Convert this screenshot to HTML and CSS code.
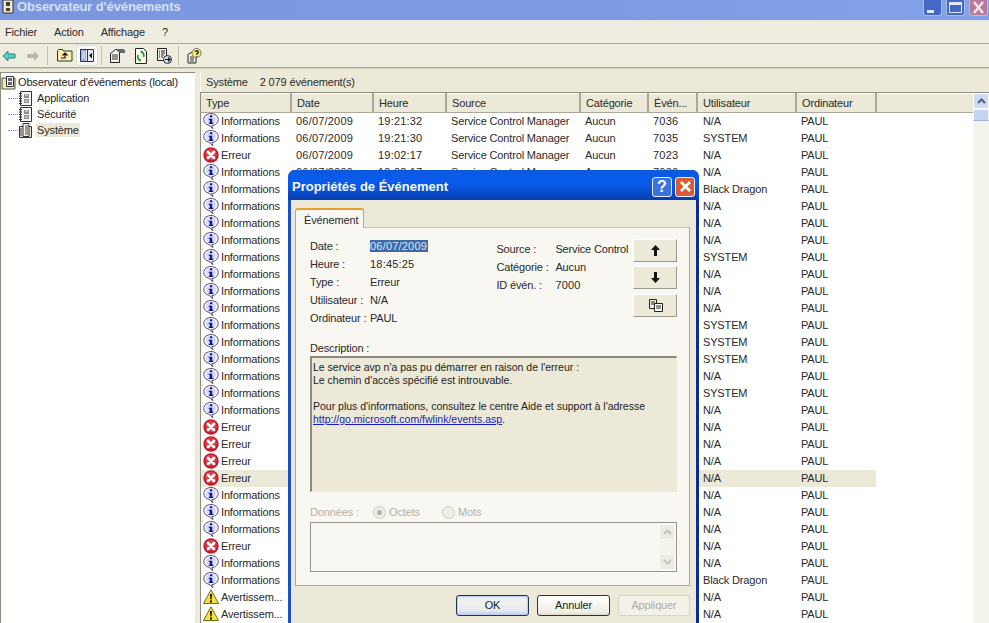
FILE: index.html
```
<!DOCTYPE html>
<html lang="fr">
<head>
<meta charset="utf-8">
<title>Observateur d'événements</title>
<link rel="stylesheet" href="styles.css">
</head>
<body>
<svg class="defs" width="0" height="0">
<symbol id="info" viewBox="0 0 16 16"><path d="M8 .5c4 0 7.200 2.600 7.200 6s-3 6-6.400 6L10 15.700 6 12.300C3 11.800.8 9.500.8 6.500c0-3.400 3.200-6 7.200-6z" fill="#f4f4fa" stroke="#50506e"/><circle cx="8" cy="6.500" r="4.800" fill="#d4d8f2"/><path d="M7 2.300h2.200v2H7zM5.800 5.800h3.400v3.900h1.100v1.300H5.800V9.700h1V7.100h-1z" fill="#14149a"/></symbol>
<symbol id="err" viewBox="0 0 16 16"><circle cx="8" cy="8" r="7.700" fill="#c01c2c"/><circle cx="8" cy="7.300" r="5.800" fill="#d84048"/><path d="M5 5l6 6M11 5l-6 6" stroke="#fff" stroke-width="2.800" stroke-linecap="round"/></symbol>
<symbol id="warn" viewBox="0 0 16 16"><path d="M8 .8L15.500 14.500H.5z" fill="#f6e23c" stroke="#7a6a18" stroke-linejoin="round"/><path d="M7 5h2l-.4 5.500H7.400zM7 11.500h2v2H7z" fill="#111"/></symbol>
<symbol id="log" viewBox="0 0 15 15"><path d="M2.500.5h11v14h-11z" fill="#f6f4ea" stroke="#333"/><path d="M1 2.500h3M1 5h3M1 7.500h3M1 10h3M1 12.500h3" stroke="#333"/><path d="M6 3h5v4H6zM6 8h5v4H6z" fill="#8c8c98"/><path d="M7 4h3M7 10h3" stroke="#eee"/></symbol>
<symbol id="log-open" viewBox="0 0 15 15"><path d="M1.500 3.500h12v11h-12z" fill="#e8e4d2" stroke="#333"/><path d="M5 .5h6v13H5z" fill="#f8f6ec" stroke="#333"/><path d="M3 5v8M7 3h3M7 5h3M7 7h3M7 9h3M7 11h3" stroke="#444"/></symbol>
</svg>

<div class="window">
  <header class="titlebar">
    <svg class="app-icon" width="14" height="14" viewBox="0 0 14 14"><path d="M2 0h10v13H2z" fill="#efe9cc" stroke="#333"/><path d="M5 2h4v4H5zM5 8h4v3H5z" fill="#443"/></svg>
    <span class="title">Observateur d'événements</span>
    <div class="win-buttons">
      <span class="win-btn"><i class="glyph-min"></i></span>
      <span class="win-btn"><i class="glyph-max"></i></span>
      <span class="win-btn win-close">
        <svg width="13" height="13" viewBox="0 0 13 13"><path d="M2 1l9 11M11 1L2 12" stroke="#f4e8ee" stroke-width="2.400"/></svg>
      </span>
    </div>
  </header>

  <nav class="menubar">
    <span>Fichier</span><span>Action</span><span>Affichage</span><span>?</span>
  </nav>

  <div class="toolbar">
    <svg class="t-back" width="14" height="12" viewBox="0 0 14 12"><path d="M1 6l5-5v3h7v4H6v3z" fill="#52d0c0" stroke="#2f8478"/></svg>
    <svg class="t-fwd" width="14" height="12" viewBox="0 0 14 12"><path d="M13 6L8 1v3H1v4h7v3z" fill="#bab8aa"/></svg>
    <i class="t-sep t-sep-a"></i>
    <svg class="t-up" width="17" height="15" viewBox="0 0 17 15"><path d="M1.500 2.500l1-1h4l1 1.500h8.500v10H1.500z" fill="#f8eeb0" stroke="#333"/><path d="M6.500 7.500L9 5l2.500 2.500M9 5.500V10H5" fill="none" stroke="#111" stroke-width="1.200"/></svg>
    <span class="t-active"><svg width="14" height="13" viewBox="0 0 14 13"><path d="M.5.500h13v12H.5z" fill="#e8ecf6" stroke="#2a3050"/><path d="M1 1h5v11H1z" fill="#9cb0d8"/><path d="M2 3h3M2 5h3M2 7h3M2 9h3" stroke="#eef" /><path d="M7 1h1v11H7z" fill="#2a3050"/><path d="M12 3.500v6L9 6.500z" fill="#111"/></svg></span>
    <i class="t-sep t-sep-b"></i>
    <svg class="t-prop" width="17" height="16" viewBox="0 0 17 16"><path d="M1.500 5.500l5-4h4v13h-9z" fill="#f4f2e6" stroke="#222"/><path d="M3 7h6M3 9h6M3 11h6" stroke="#333"/><path d="M8 1h6l2 1v3h-5L8 3z" fill="#606870"/></svg>
    <svg class="t-ref" width="14" height="16" viewBox="0 0 14 16"><path d="M1.500.5h8l3 3v12h-11z" fill="#fbfbf0" stroke="#222"/><path d="M6.500 3.500a4 4 0 0 1 3 5.500M7 12.500a4 4 0 0 1-3-5.500" fill="none" stroke="#1c9a3c" stroke-width="1.800"/></svg>
    <svg class="t-exp" width="16" height="16" viewBox="0 0 16 16"><path d="M1.500.5h9v12h-9z" fill="#f4f2e6" stroke="#222"/><path d="M3 3h1M5 3h4M3 5h1M5 5h4M3 7h1M5 7h3M3 9h1M5 9h2" stroke="#223"/><circle cx="11.500" cy="11.500" r="4" fill="#dfe4ee" stroke="#223"/><path d="M9 11.500h5M12 9.500l2 2-2 2" fill="none" stroke="#111" stroke-width="1.200"/></svg>
    <i class="t-sep t-sep-c"></i>
    <svg class="t-help" width="15" height="16" viewBox="0 0 15 16"><path d="M1 6.500l3-2h5v10.500H1z" fill="#f4f2e6" stroke="#222"/><path d="M3 9h4M3 11h4M3 13h4" stroke="#333"/><circle cx="9.500" cy="5" r="4.500" fill="#f8ee70" stroke="#776"/><path d="M7.800 3.800a1.800 1.500 0 1 1 2 2v1M9.800 8v.800" fill="none" stroke="#222" stroke-width="1.400"/></svg>
  </div>

  <main class="panes">
    <aside class="tree">
      <div class="tree-root"><svg class="ti" width="15" height="15" viewBox="0 0 15 15"><path d="M1 3h13v11H1z" fill="#f2e9b4" stroke="#554"/><path d="M5.500 1.500h7v10h-7z" fill="#fff" stroke="#333"/><path d="M7 3h4v3H7zM7 7h4v3H7z" fill="#667"/></svg>Observateur d'événements (local)</div>
      <div class="tree-item"><i class="dots"></i><svg class="ti"><use href="#log"/></svg><span>Application</span></div>
      <div class="tree-item"><i class="dots"></i><svg class="ti"><use href="#log"/></svg><span>Sécurité</span></div>
      <div class="tree-item"><i class="dots"></i><svg class="ti"><use href="#log-open"/></svg><span class="selected">Système</span></div>
    </aside>

    <section class="content">
      <div class="status"><span>Système</span><span>2 079 événement(s)</span></div>
      <div class="list">
        <div class="table-wrap">
          <table class="events">
            <colgroup><col class="c1"><col class="c2"><col class="c3"><col class="c4"><col class="c5"><col class="c6"><col class="c7"><col class="c8"><col></colgroup>
            <thead><tr><th>Type</th><th>Date</th><th>Heure</th><th>Source</th><th>Catégorie</th><th>Évén...</th><th>Utilisateur</th><th>Ordinateur</th><th></th></tr></thead>
            <tbody>
              <tr><td><svg class="ic"><use href="#info"/></svg>Informations</td><td>06/07/2009</td><td>19:21:32</td><td>Service Control Manager</td><td>Aucun</td><td>7036</td><td>N/A</td><td>PAUL</td></tr>
              <tr><td><svg class="ic"><use href="#info"/></svg>Informations</td><td>06/07/2009</td><td>19:21:30</td><td>Service Control Manager</td><td>Aucun</td><td>7035</td><td>SYSTEM</td><td>PAUL</td></tr>
              <tr><td><svg class="ic"><use href="#err"/></svg>Erreur</td><td>06/07/2009</td><td>19:02:17</td><td>Service Control Manager</td><td>Aucun</td><td>7023</td><td>N/A</td><td>PAUL</td></tr>
              <tr><td><svg class="ic"><use href="#info"/></svg>Informations</td><td>06/07/2009</td><td>19:02:17</td><td>Service Control Manager</td><td>Aucun</td><td>7036</td><td>N/A</td><td>PAUL</td></tr>
              <tr><td><svg class="ic"><use href="#info"/></svg>Informations</td><td></td><td></td><td></td><td></td><td></td><td>Black Dragon</td><td>PAUL</td></tr>
              <tr><td><svg class="ic"><use href="#info"/></svg>Informations</td><td></td><td></td><td></td><td></td><td></td><td>N/A</td><td>PAUL</td></tr>
              <tr><td><svg class="ic"><use href="#info"/></svg>Informations</td><td></td><td></td><td></td><td></td><td></td><td>N/A</td><td>PAUL</td></tr>
              <tr><td><svg class="ic"><use href="#info"/></svg>Informations</td><td></td><td></td><td></td><td></td><td></td><td>N/A</td><td>PAUL</td></tr>
              <tr><td><svg class="ic"><use href="#info"/></svg>Informations</td><td></td><td></td><td></td><td></td><td></td><td>SYSTEM</td><td>PAUL</td></tr>
              <tr><td><svg class="ic"><use href="#info"/></svg>Informations</td><td></td><td></td><td></td><td></td><td></td><td>N/A</td><td>PAUL</td></tr>
              <tr><td><svg class="ic"><use href="#info"/></svg>Informations</td><td></td><td></td><td></td><td></td><td></td><td>N/A</td><td>PAUL</td></tr>
              <tr><td><svg class="ic"><use href="#info"/></svg>Informations</td><td></td><td></td><td></td><td></td><td></td><td>N/A</td><td>PAUL</td></tr>
              <tr><td><svg class="ic"><use href="#info"/></svg>Informations</td><td></td><td></td><td></td><td></td><td></td><td>SYSTEM</td><td>PAUL</td></tr>
              <tr><td><svg class="ic"><use href="#info"/></svg>Informations</td><td></td><td></td><td></td><td></td><td></td><td>SYSTEM</td><td>PAUL</td></tr>
              <tr><td><svg class="ic"><use href="#info"/></svg>Informations</td><td></td><td></td><td></td><td></td><td></td><td>SYSTEM</td><td>PAUL</td></tr>
              <tr><td><svg class="ic"><use href="#info"/></svg>Informations</td><td></td><td></td><td></td><td></td><td></td><td>N/A</td><td>PAUL</td></tr>
              <tr><td><svg class="ic"><use href="#info"/></svg>Informations</td><td></td><td></td><td></td><td></td><td></td><td>SYSTEM</td><td>PAUL</td></tr>
              <tr><td><svg class="ic"><use href="#info"/></svg>Informations</td><td></td><td></td><td></td><td></td><td></td><td>N/A</td><td>PAUL</td></tr>
              <tr><td><svg class="ic"><use href="#err"/></svg>Erreur</td><td></td><td></td><td></td><td></td><td></td><td>N/A</td><td>PAUL</td></tr>
              <tr><td><svg class="ic"><use href="#err"/></svg>Erreur</td><td></td><td></td><td></td><td></td><td></td><td>N/A</td><td>PAUL</td></tr>
              <tr><td><svg class="ic"><use href="#err"/></svg>Erreur</td><td></td><td></td><td></td><td></td><td></td><td>N/A</td><td>PAUL</td></tr>
              <tr class="current"><td><svg class="ic"><use href="#err"/></svg>Erreur</td><td></td><td></td><td></td><td></td><td></td><td>N/A</td><td>PAUL</td></tr>
              <tr><td><svg class="ic"><use href="#info"/></svg>Informations</td><td></td><td></td><td></td><td></td><td></td><td>N/A</td><td>PAUL</td></tr>
              <tr><td><svg class="ic"><use href="#info"/></svg>Informations</td><td></td><td></td><td></td><td></td><td></td><td>N/A</td><td>PAUL</td></tr>
              <tr><td><svg class="ic"><use href="#info"/></svg>Informations</td><td></td><td></td><td></td><td></td><td></td><td>N/A</td><td>PAUL</td></tr>
              <tr><td><svg class="ic"><use href="#err"/></svg>Erreur</td><td></td><td></td><td></td><td></td><td></td><td>N/A</td><td>PAUL</td></tr>
              <tr><td><svg class="ic"><use href="#info"/></svg>Informations</td><td></td><td></td><td></td><td></td><td></td><td>N/A</td><td>PAUL</td></tr>
              <tr><td><svg class="ic"><use href="#info"/></svg>Informations</td><td></td><td></td><td></td><td></td><td></td><td>Black Dragon</td><td>PAUL</td></tr>
              <tr><td><svg class="ic"><use href="#warn"/></svg>Avertissem...</td><td></td><td></td><td></td><td></td><td></td><td>N/A</td><td>PAUL</td></tr>
              <tr><td><svg class="ic"><use href="#warn"/></svg>Avertissem...</td><td></td><td></td><td></td><td></td><td></td><td>N/A</td><td>PAUL</td></tr>
            </tbody>
          </table>
        </div>
        <div class="vscroll">
          <span class="sb-btn"><svg width="9" height="6" viewBox="0 0 9 6"><path d="M1 5l3.500-3.500L8 5" fill="none" stroke="#4d6185" stroke-width="2"/></svg></span>
          <span class="sb-thumb"></span>
        </div>
      </div>
    </section>
  </main>
</div>

<div class="dialog">
  <header class="dlg-title">
    <span>Propriétés de Événement</span>
    <div class="dlg-buttons">
      <span class="dlg-btn dlg-help">?</span>
      <span class="dlg-btn dlg-close"><svg width="15" height="15" viewBox="0 0 15 15"><path d="M3 3l9 9M12 3l-9 9" stroke="#fff" stroke-width="2.600"/></svg></span>
    </div>
  </header>
  <div class="dlg-client">
    <div class="tab">Événement</div>
    <div class="tab-panel">
      <div class="summary">
        <dl class="fields fields-a">
          <dt>Date :</dt><dd><mark>06/07/2009</mark></dd>
          <dt>Heure :</dt><dd class="num">18:45:25</dd>
          <dt>Type :</dt><dd>Erreur</dd>
          <dt>Utilisateur :</dt><dd>N/A</dd>
          <dt>Ordinateur :</dt><dd>PAUL</dd>
        </dl>
        <dl class="fields fields-b">
          <dt>Source :</dt><dd>Service Control</dd>
          <dt>Catégorie :</dt><dd>Aucun</dd>
          <dt>ID évén. :</dt><dd class="num">7000</dd>
        </dl>
        <div class="nav-buttons">
          <button class="nav-btn"><svg width="9" height="11" viewBox="0 0 9 11"><path d="M4.500 0L9 5H6v6H3V5H0z" fill="#111"/></svg></button>
          <button class="nav-btn"><svg width="9" height="11" viewBox="0 0 9 11"><path d="M4.500 11L9 6H6V0H3v6H0z" fill="#111"/></svg></button>
          <button class="nav-btn nav-copy"><svg width="15" height="13" viewBox="0 0 15 13"><path d="M1.500.5h7v9h-7z" fill="#f0eee0" stroke="#222"/><path d="M3 3h4M3 5h3" stroke="#222"/><path d="M6.500 4.500h8v8h-8z" fill="#fff" stroke="#222"/><path d="M8 7h5M8 9h5" stroke="#222"/></svg></button>
        </div>
      </div>
      <div class="desc-label">Description :</div>
      <div class="desc">
        <p>Le service avp n'a pas pu démarrer en raison de l'erreur :<br>Le chemin d'accès spécifié est introuvable.</p>
        <p class="desc-more">Pour plus d'informations, consultez le centre Aide et support à l'adresse<br><a href="#">http://go.microsoft.com/fwlink/events.asp</a>.</p>
      </div>
      <div class="data-row">
        <span class="data-label">Données :</span>
        <span class="radio"><i class="dot on"></i>Octets</span>
        <span class="radio"><i class="dot"></i>Mots</span>
      </div>
      <div class="data-box">
        <div class="data-scroll">
          <span class="ds-btn"><svg width="9" height="6" viewBox="0 0 9 6"><path d="M1 5l3.500-3.500L8 5" fill="none" stroke="#c4c4b8" stroke-width="2"/></svg></span>
          <span class="ds-btn"><svg width="9" height="6" viewBox="0 0 9 6"><path d="M1 1l3.500 3.500L8 1" fill="none" stroke="#c4c4b8" stroke-width="2"/></svg></span>
        </div>
      </div>
    </div>
    <div class="actions">
      <button class="btn btn-default">OK</button>
      <button class="btn">Annuler</button>
      <button class="btn btn-disabled">Appliquer</button>
    </div>
  </div>
</div>
</body>
</html>
```

FILE: styles.css
```
* { box-sizing: border-box; }
html, body { margin: 0; height: 100%; overflow: hidden; }
body {
  position: relative;
  width: 989px;
  height: 623px;
  background: #ece9d8;
  font: 11px/13px "Liberation Sans", Arial, sans-serif;
  letter-spacing: -.15px;
  color: #2a2a2a;
}
.defs { position: absolute; }
.window { display: flex; flex-direction: column; height: 623px; }

.titlebar {
  flex: none;
  height: 22px;
  display: flex;
  align-items: flex-start;
  background: linear-gradient(90deg, #7a96df, #7d9be2 60%, #84a2e6);
  border-bottom: 2px solid #e8e8e4;
}
.app-icon { margin: 0 0 0 1px; }
.title {
  margin: 0 0 0 2px;
  font: bold 13px/14px "Liberation Sans", Arial, sans-serif;
  letter-spacing: -.12px;
  color: #d4e0f6;
}
.win-buttons { margin-left: auto; display: flex; gap: 4px; padding-right: 1px; }
.win-btn {
  width: 19px;
  height: 16px;
  display: flex;
  align-items: center;
  justify-content: center;
  border-radius: 0 0 3px 3px;
  background: #4468c4;
  border: 1px solid #a9bceb;
  border-top: 0;
}
.win-close { background: #b87a98; }
.glyph-min { width: 7px; height: 3px; background: #dfe7f8; align-self: flex-end; margin: 0 5px 2px 0; }
.glyph-max { width: 13px; height: 11px; border: 1px solid #dfe7f8; border-top-width: 3px; }

.menubar {
  flex: none;
  height: 22px;
  display: flex;
  align-items: center;
  gap: 17px;
  padding-left: 5px;
  background: #efece0;
  border-bottom: 1px solid #aca899;
}

.toolbar {
  flex: none;
  height: 24px;
  display: flex;
  align-items: center;
  background: #efece0;
  border-bottom: 1px solid #aca899;
}
.t-back { margin-left: 2px; }
.t-fwd { margin-left: 10px; }
.t-sep { width: 1px; height: 19px; background: #c4c1b2; }
.t-sep-a { margin-left: 7px; }
.t-up { margin-left: 8px; }
.t-active {
  width: 22px;
  height: 21px;
  margin-left: 3px;
  display: flex;
  align-items: center;
  justify-content: center;
  background: #f9f9f7;
  border: 1px solid #e0ddd0;
  border-radius: 3px;
}
.t-sep-b { margin-left: 3px; }
.t-prop { margin-left: 7px; }
.t-ref { margin-left: 8px; }
.t-exp { margin-left: 8px; }
.t-sep-c { margin-left: 6px; }
.t-help { margin-left: 8px; }

.panes {
  flex: 1;
  min-height: 0;
  display: flex;
  gap: 5px;
  padding-top: 3px;
  background: #ece9d8;
  border-top: 1px solid #cfccbc;
}
.tree {
  width: 195px;
  flex: none;
  background: #fff;
  border-top: 1px solid #8e8c80;
  border-left: 1px solid #8e8c80;
  padding-top: 1px;
  overflow: hidden;
}
.tree-root { display: flex; align-items: center; height: 16px; gap: 2px; white-space: nowrap; color: #222; }
.tree-item { display: flex; align-items: center; height: 16px; padding-left: 7px; }
.tree-item span { padding: 0 1px; margin-left: 3px; line-height: 14px; }
.tree-item .selected { background: #ece9d8; }
.dots { width: 10px; border-top: 1px dotted #888; }
.ti { width: 15px; height: 15px; flex: none; }

.content { flex: 1; min-width: 0; display: flex; flex-direction: column; }
.status {
  flex: none;
  height: 20px;
  display: flex;
  align-items: center;
  gap: 12px;
  padding-left: 5px;
  background: #ece9d8;
  border-left: 1px solid #fff;
}
.list {
  flex: 1;
  min-height: 0;
  display: flex;
  background: #fff;
  border: 1px solid #8e8c80;
  border-right: 0;
  border-bottom: 0;
  overflow: hidden;
}
.table-wrap { flex: 1; min-width: 0; overflow: hidden; }
.events { width: 100%; table-layout: fixed; border-collapse: collapse; }
.c1 { width: 90px; } .c2 { width: 82px; } .c3 { width: 73px; } .c4 { width: 134px; }
.c5 { width: 68px; } .c6 { width: 49px; } .c7 { width: 99px; } .c8 { width: 80px; }
.events th {
  height: 19px;
  padding: 0 0 0 5px;
  font-weight: normal;
  text-align: left;
  background: #ece9d8;
  border-right: 2px solid #aca899;
  border-bottom: 1px solid #aca899;
  border-top: 1px solid #fff;
}
.events th:last-child { border-right: 0; }
.events td {
  height: 17px;
  padding: 0 0 0 5px;
  white-space: nowrap;
  overflow: hidden;
  vertical-align: middle;
}
.events td:first-child { padding-left: 2px; }
.events td:nth-child(2), .events td:nth-child(3), .events td:nth-child(6) { letter-spacing: .2px; }
.events td:nth-child(7) { padding-left: 6px; }
.events tr.current td { background: #ece9d8; }
.events tr.current td:nth-child(9) { background: #fff; }
.ic { width: 16px; height: 16px; margin-right: 2px; vertical-align: -4px; }

.vscroll {
  flex: none;
  width: 16px;
  background: #f4f4ec;
  display: flex;
  flex-direction: column;
}
.sb-btn {
  height: 16px;
  display: flex;
  align-items: center;
  justify-content: center;
  background: #cfdbf4;
  border: 1px solid #fff;
  border-radius: 2px;
}
.sb-thumb { height: 12px; background: #c6d3f3; border: 1px solid #f2f5fc; border-bottom-color: #a3b3d8; }

.dialog {
  position: absolute;
  left: 288px;
  top: 170px;
  width: 411px;
  height: 470px;
  display: flex;
  flex-direction: column;
  background: linear-gradient(90deg, #1c50c8 0, #1c50c8 3px, #0a2c98 3px);
  border-radius: 7px 7px 0 0;
  overflow: hidden;
  padding: 0 3px;
}
.dlg-title {
  flex: none;
  height: 30px;
  margin: 0 -3px;
  display: flex;
  align-items: center;
  padding: 4px 4px 0 4px;
  background: linear-gradient(180deg, #1058d8, #0a5ae8 15%, #0a5cec 40%, #0850d4 70%, #0a3cac);
  color: #f4f8ff;
  font: bold 13px/16px "Liberation Sans", Arial, sans-serif;
  letter-spacing: 0;
}
.dlg-buttons { margin-left: auto; display: flex; gap: 3px; margin-top: -1px; }
.dlg-btn {
  width: 20px;
  height: 20px;
  display: flex;
  align-items: center;
  justify-content: center;
  border: 1px solid #e8f0ff;
  border-radius: 3px;
}
.dlg-help { background: #3a72e4; color: #fff; font: bold 16px/1 "Liberation Sans", Arial, sans-serif; }
.dlg-close { background: #d85c38; }
.dlg-client { flex: 1; background: #ece9d8; padding: 8px 6px 0 4px; display: flex; flex-direction: column; }
.tab {
  align-self: flex-start;
  width: 69px;
  height: 20px;
  margin-bottom: -1px;
  padding: 4px 0 0 8px;
  position: relative;
  background: #f8f7f2;
  border: 1px solid #aca899;
  border-top: 2px solid #e6a030;
  border-bottom: 0;
  border-radius: 3px 3px 0 0;
}
.tab-panel {
  height: 359px;
  flex: none;
  padding: 9px 12px 0 14px;
  background: #f8f7f2;
  border: 1px solid #aca899;
  border-top-color: #c4c1b2;
}
.summary { display: flex; height: 105px; }
.fields {
  margin: 0;
  display: grid;
  grid-auto-rows: 18px;
  align-items: center;
  align-content: start;
}
.fields dd { margin: 0; white-space: nowrap; }
.fields .num { letter-spacing: .2px; }
.fields-a { width: 187px; grid-template-columns: 60px 1fr; }
.fields-b { margin-top: 3px; width: 137px; grid-template-columns: 59px 1fr; }
mark { background: #3e6aa8; color: #dfe6f4; padding: 0 1px 0 0; letter-spacing: .2px; }
.nav-buttons { display: flex; flex-direction: column; gap: 4px; margin-top: 2px; }
.nav-btn {
  width: 44px;
  height: 23px;
  flex: none;
  padding: 0;
  display: flex;
  align-items: center;
  justify-content: center;
  background: #ece9d8;
  border: 0;
  border-right: 1px solid #9a988c;
  border-bottom: 1px solid #9a988c;
  border-top: 1px solid #fff;
  border-left: 1px solid #fff;
}
.nav-copy { margin-top: 1px; }
.desc-label { height: 13px; }
.desc {
  height: 136px;
  margin-top: 1px;
  padding: 3px 2px 0 1px;
  background: #ece9d8;
  border: 1px solid #ece9d8;
  border-top: 2px solid #8c8a7e;
  border-left: 2px solid #8c8a7e;
  color: #222;
  font-size: 10.5px;
  letter-spacing: 0;
}
.desc p { margin: 0; }
.desc .desc-more { margin-top: 13px; }
.desc a { color: #1a1ac0; }
.data-row { display: flex; align-items: center; height: 30px; padding-top: 11px; color: #b4b2a6; }
.data-label { width: 63px; }
.radio { display: flex; align-items: center; gap: 3px; width: 69px; }
.dot { width: 13px; height: 13px; border: 1px solid #cfcdc0; border-radius: 50%; display: flex; align-items: center; justify-content: center; background: #f0eee4; }
.dot.on::before { content: ""; width: 5px; height: 5px; border-radius: 50%; background: #b4b2a6; }
.data-box {
  height: 50px;
  display: flex;
  justify-content: flex-end;
  border: 1px solid #98968a;
  padding: 1px;
}
.data-scroll { width: 16px; background: #f4f3ec; display: flex; flex-direction: column; justify-content: space-between; }
.ds-btn { height: 16px; display: flex; align-items: center; justify-content: center; background: #eeece2; border: 1px solid #f8f8f4; }
.actions { display: flex; justify-content: flex-end; gap: 8px; padding: 9px 0 0 0; }
.btn {
  width: 73px;
  height: 21px;
  padding: 0;
  font: 11px/13px "Liberation Sans", Arial, sans-serif;
  letter-spacing: -.15px;
  color: #222;
  background: linear-gradient(180deg, #fdfdfb, #f0efe6 85%, #dcd8c8);
  border: 1px solid #1f3558;
  border-radius: 3px;
}
.btn-default { background: linear-gradient(180deg, #dfe8fa, #f2f3f0 30%, #e4e8f0 80%, #b4c8ec); box-shadow: inset 0 0 0 1px #bccdf0; }
.btn-disabled { width: 72px; color: #b0aea0; border-color: #d8d5c6; background: #f4f2e8; }
```
